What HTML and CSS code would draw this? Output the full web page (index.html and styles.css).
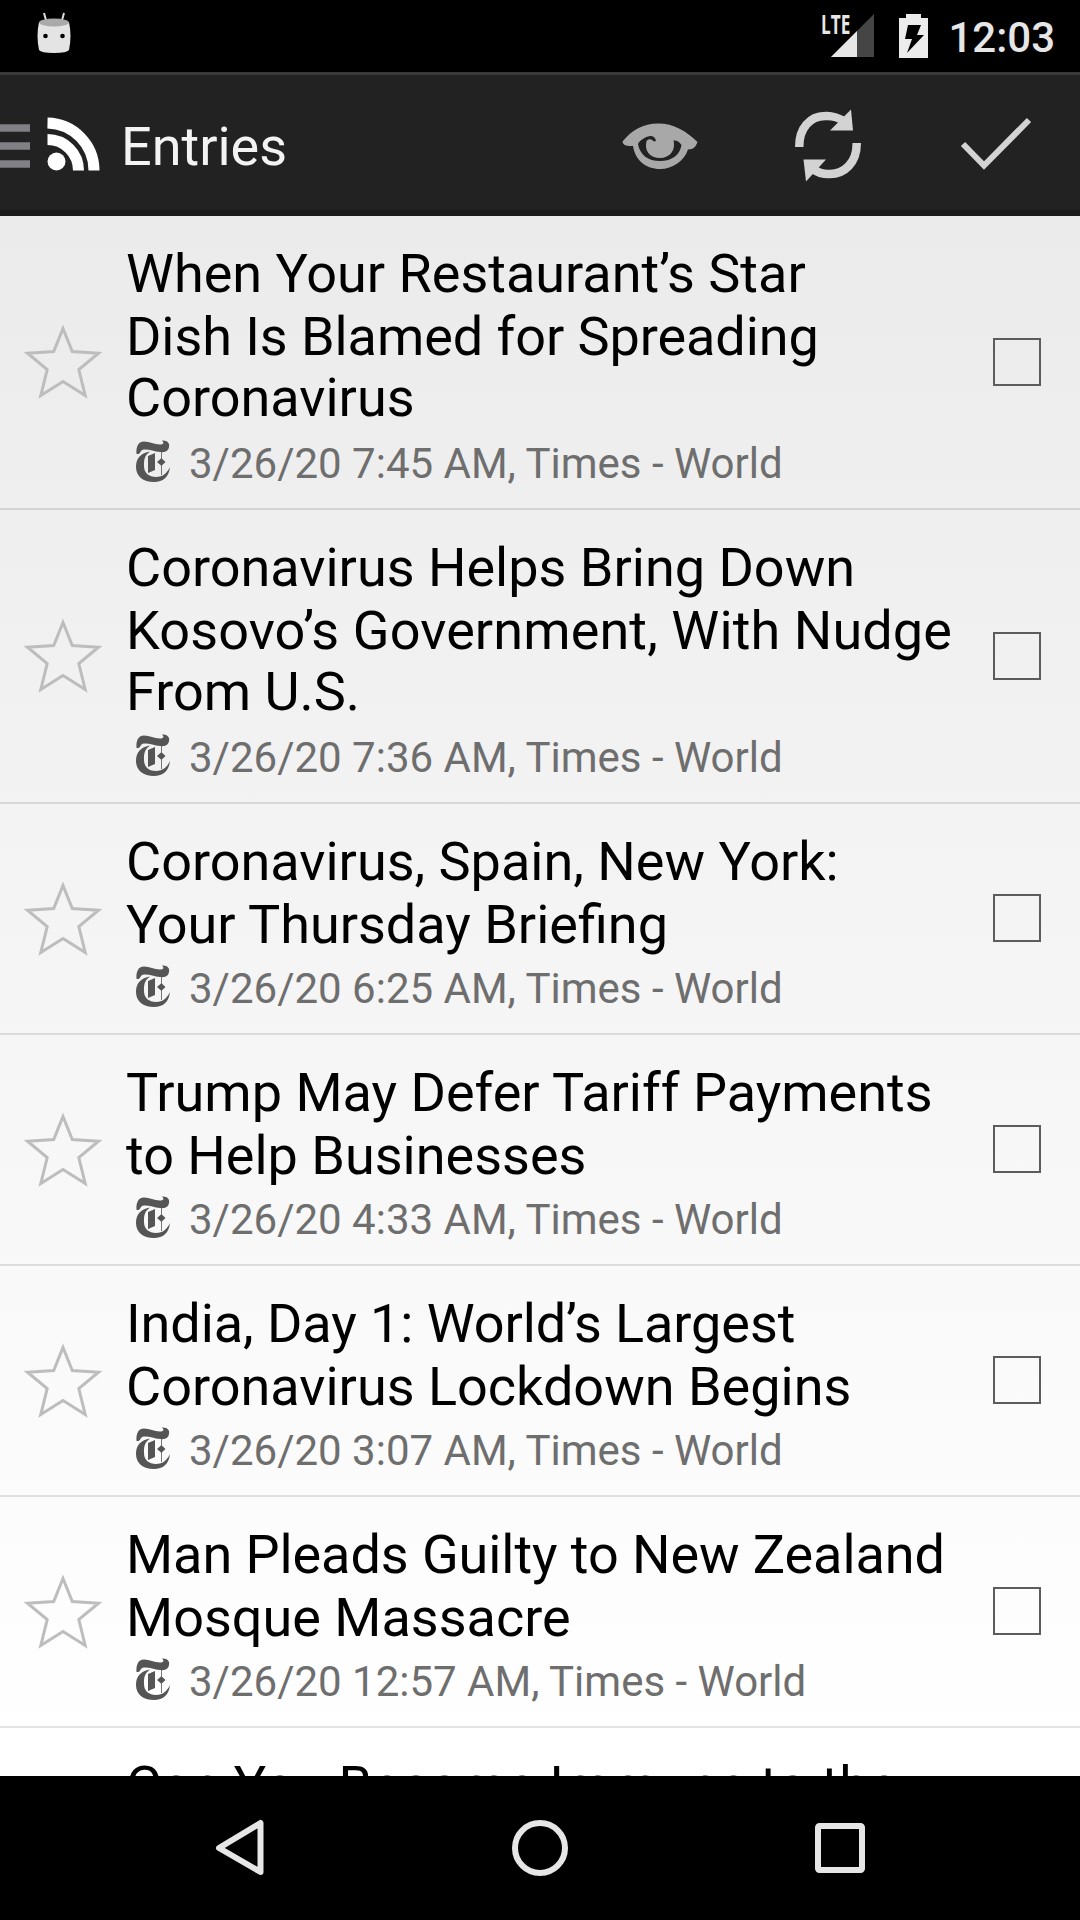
FILE: index.html
```html
<!DOCTYPE html>
<html lang="en">
<head>
<meta charset="utf-8">
<title>Entries</title>
<link rel="stylesheet" href="styles.css">
</head>
<body>
<svg class="defs" width="0" height="0" aria-hidden="true">
  <symbol id="star" viewBox="0 0 80 80"><path d="M40 6.500L49.300 29.500L75.500 31.200L55.800 47.500L62.200 73.500L40 59.500L17.800 73.500L24.200 47.500L4.500 31.200L30.700 29.500Z" fill="none" stroke="#bdbdbd" stroke-width="3"/></symbol>
  <symbol id="times" viewBox="0 0 34 42"><path d="M0.500 14C0 7 2 1.500 8 1.500C14 1.500 19 5 25 4.500C28 4 28 2.500 26 0.500C31 0 34 3 33 7C32 12 28 12.500 24 12C18 11.500 13 9 8 9.500C4 10 5 13 2.500 14ZM14 11.500C8 16 8 20 8 26C8 33 13 37 20 37C27 37 31 33 34 27C33 37 27 42 18 42C7 42 0 36 0 27C0 18 5 13 14 11.500ZM12 16L19 13V30L12 33ZM25 12H25.800V18.500L29.500 22L25.800 25.500V35H25V25.500L21 22L25 18.500Z" fill="#555"/></symbol>
</svg>
<div class="screen">
  <header class="status">
    <svg width="36" height="42" viewBox="0 0 36 42"><path d="M8 1L10.500 10M28 1L25.500 10" stroke="#ddd" stroke-width="2"/><path d="M3 10Q18 14 33 10Q36 24 33 38Q31 41 18 41Q5 41 3 38Q0 24 3 10Z" fill="#e4e4e4"/><ellipse cx="18" cy="10.500" rx="15" ry="4" fill="#aaa"/><circle cx="9.500" cy="24" r="2.300"/><circle cx="26.500" cy="24" r="2.300"/></svg>
    <div class="indicators">
      <div class="signal"><span class="lte">LTE</span><svg width="43" height="43" viewBox="0 0 43 43"><path d="M43 0V43H0Z" fill="#454545"/><path d="M26 17V43H0Z" fill="#e6e6e6"/></svg></div>
      <svg class="battery" width="29" height="44" viewBox="0 0 29 44"><path d="M7 0H22V4H29V44H0V4H7Z" fill="#ececec"/><path d="M9 11H22L18 21H25L8 39L13 25H6Z" fill="#000"/></svg>
      <span class="clock">12:03</span>
    </div>
  </header>
  <div class="toolbar">
    <svg class="drawer" width="30" height="44" viewBox="0 0 30 44"><path d="M0 4H30M0 22H30M0 40H30" stroke="#808085" stroke-width="7.500"/></svg>
    <svg class="rss" width="54" height="54" viewBox="0 0 54 54"><circle cx="9.500" cy="44.500" r="9" fill="#fff"/><path d="M0.500 22.500A31 31 0 0 1 31.500 53.500M0.500 6A47.500 47.500 0 0 1 47 53.500" fill="none" stroke="#fff" stroke-width="11"/></svg>
    <h1>Entries</h1>
    <div class="actions">
      <svg class="eye" width="76" height="46" viewBox="0 0 76 46"><path d="M0.500 18.500C10 7 21 0.500 36 0.500C52 0.500 64 8 75.500 19C74 23 72 26.500 66 26.500C62 38 51 46 38 46C24 46 13 37 11 23C6 23 1 23 0.500 18.500ZM16 21C18 32 26 38 38 38C50 38 58 32 59.500 22C57 18 54 17 51.500 17.500C54 27 48 35 38 35C28 35 22 28 24.500 18C27 15 30 16 32 18.500L34 18C33 14 31 13 28 13C23 14 18 17 16 21Z" fill="#a8a8a8"/></svg>
      <svg class="refresh" width="66" height="74" viewBox="0 0 66 74"><g fill="none" stroke="#d3d3d3" stroke-width="8.500"><path d="M4.300 38C4 19 15 7.300 30 7C39 6.500 44 9 50 13"/><path d="M61.700 34C62 54 49 65 35 65C27 65.500 22 63 18 60"/></g><path d="M56 0.500L58 21.500H35ZM8.500 50.500H31L11 72.500Z" fill="#d3d3d3"/></svg>
      <svg class="done" width="72" height="54" viewBox="0 0 72 54"><path d="M3 27L24 48.500L69 3" fill="none" stroke="#d3d3d3" stroke-width="6"/></svg>
    </div>
  </div>
  <main class="list">
    <article class="entry tall"><svg class="star"><use href="#star"/></svg><div class="body"><h2>When Your Restaurant’s Star<br><span class="tight">Dish Is Blamed for Spreading</span><span class="third">Coronavirus</span></h2><p><svg class="times"><use href="#times"/></svg>3/26/20 7:45 AM, Times - World</p></div><i class="check"></i></article>
    <article class="entry tall"><svg class="star"><use href="#star"/></svg><div class="body"><h2>Coronavirus Helps Bring Down<br><span class="loose">Kosovo’s Government, With Nudge</span><span class="third">From U.S.</span></h2><p><svg class="times"><use href="#times"/></svg>3/26/20 7:36 AM, Times - World</p></div><i class="check"></i></article>
    <article class="entry"><svg class="star"><use href="#star"/></svg><div class="body"><h2>Coronavirus, Spain, New York:<br>Your Thursday Briefing</h2><p><svg class="times"><use href="#times"/></svg>3/26/20 6:25 AM, Times - World</p></div><i class="check"></i></article>
    <article class="entry"><svg class="star"><use href="#star"/></svg><div class="body"><h2>Trump May Defer Tariff Payments<br>to Help Businesses</h2><p><svg class="times"><use href="#times"/></svg>3/26/20 4:33 AM, Times - World</p></div><i class="check"></i></article>
    <article class="entry"><svg class="star"><use href="#star"/></svg><div class="body"><h2><span class="tight">India, Day 1: World’s Largest</span><br>Coronavirus Lockdown Begins</h2><p><svg class="times"><use href="#times"/></svg>3/26/20 3:07 AM, Times - World</p></div><i class="check"></i></article>
    <article class="entry"><svg class="star"><use href="#star"/></svg><div class="body"><h2><span class="tight">Man Pleads Guilty to New Zealand</span><br>Mosque Massacre</h2><p><svg class="times"><use href="#times"/></svg>3/26/20 12:57 AM, Times - World</p></div><i class="check"></i></article>
    <article class="entry last"><div class="star"></div><div class="body"><h2>Can You Become Immune to the</h2></div></article>
  </main>
  <nav class="nav">
    <svg width="52" height="60" viewBox="0 0 52 60"><path d="M47.500 5V54L6 30Z" fill="none" stroke="#e6e6e6" stroke-width="6" stroke-linejoin="round"/></svg>
    <svg width="56" height="56" viewBox="0 0 56 56"><circle cx="28" cy="28" r="25" fill="none" stroke="#e6e6e6" stroke-width="6"/></svg>
    <svg width="50" height="50" viewBox="0 0 50 50"><rect x="3" y="3" width="44" height="44" rx="1.500" fill="none" stroke="#e6e6e6" stroke-width="6"/></svg>
  </nav>
</div>
</body>
</html>
```
FILE: styles.css
```css
* { box-sizing: border-box; margin: 0; padding: 0; }
body { font-family: Roboto, "Noto Sans", sans-serif; background: #000; }
svg { display: block; flex: none; }
.defs { position: absolute; }
.screen { width: 1080px; height: 1920px; display: flex; flex-direction: column; overflow: hidden; }
.status { height: 72px; background: #000; display: flex; align-items: flex-start; justify-content: space-between; padding: 12px 25px 0 36px; }
.indicators { display: flex; align-items: flex-start; color: #e6e6e6; }
.signal { display: flex; margin: 2px 25px 0 0; }
.lte { width: 10px; font: 700 26px/20px "Open Sans", sans-serif; transform: scaleX(.66); transform-origin: left; }
.battery { margin: 2px 20px 0 0; }
.clock { font-size: 42px; font-weight: 500; line-height: 51px; }
.toolbar { height: 144px; background: #222; border-top: 3px solid #393939; border-bottom: 6px solid #1a1a1a; display: flex; align-items: center; color: #f3f3f3; }
.drawer { margin-top: 7px; }
.rss { margin: 3px 0 0 17px; }
.toolbar h1 { font-size: 54px; font-weight: 400; line-height: 64px; margin: 8px 0 0 20px; }
.actions { flex: 1; display: flex; justify-content: flex-end; align-items: center; padding-right: 48px; }
.eye { margin-top: 7px; }
.refresh { margin: 6px 99px 0 97px; }
.done { margin-top: 3px; }
.list { height: 1560px; overflow: hidden; background: linear-gradient(#ebebeb, #fff 98%); }
.entry { height: 231px; border-bottom: 2px solid rgba(0,0,0,.11); display: flex; align-items: center; padding-right: 39px; }
.entry.tall { height: 294px; }
.star { width: 80px; height: 80px; margin: 0 23px 0 23px; }
.body { flex: 1; align-self: stretch; padding-top: 26px; white-space: nowrap; }
.body h2 { font-size: 54px; font-weight: 400; line-height: 63px; color: #000; }
.tight { letter-spacing: -.07px; }
.loose { letter-spacing: .11px; }
.third { display: block; margin-top: -2px; padding-bottom: 2px; }
.body p { display: flex; align-items: center; font-size: 42px; line-height: 50px; color: #6e6e6e; margin-top: 8px; }
.times { width: 34px; height: 42px; margin: -6px 19px 0 10px; }
.check { width: 48px; height: 48px; border: 2px solid #5c5c5c; }
.entry:not(.tall) .check { margin-bottom: 1px; }
.nav { height: 144px; background: #000; display: flex; align-items: center; justify-content: space-between; padding: 0 215px 0 213px; }
```
